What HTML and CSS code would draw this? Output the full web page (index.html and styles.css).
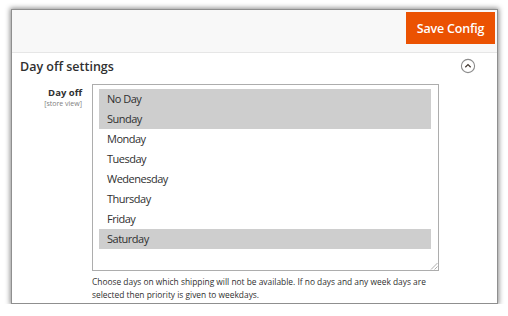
FILE: index.html
```html
<!DOCTYPE html>
<html lang="en">
<head>
    <meta charset="UTF-8">
    <title>Day off settings</title>
    <link rel="stylesheet" href="styles.css">
</head>
<body>
    <div class="frame">
        <div class="page-actions">
            <button class="save-button">Save Config</button>
        </div>
        <div class="section">
            <div class="section-title">
                <span>Day off settings</span>
                <svg class="collapse-icon" width="16" height="16" viewBox="0 0 16 16">
                    <circle cx="8" cy="8" r="6.6" fill="none" stroke="#8c8c8c" stroke-width="1.1"/>
                    <path d="M5.3 9.2 L8 6.6 L10.7 9.2" fill="none" stroke="#41362f" stroke-width="1.2"/>
                </svg>
            </div>
            <div class="field">
                <div class="field-label">
                    <div class="label-text">Day off</div>
                    <div class="scope">[store view]</div>
                </div>
                <div class="field-control">
                    <div class="listbox" role="listbox">
                        <div class="option selected">No Day</div>
                        <div class="option selected">Sunday</div>
                        <div class="option">Monday</div>
                        <div class="option">Tuesday</div>
                        <div class="option">Wedenesday</div>
                        <div class="option">Thursday</div>
                        <div class="option">Friday</div>
                        <div class="option selected">Saturday</div>
                        <svg class="grip" width="8" height="8" viewBox="0 0 8 8">
                            <path d="M7.5 1 L1 7.5 M7.5 4.5 L4.5 7.5" stroke="#9a9a9a" stroke-width="0.8"/>
                        </svg>
                    </div>
                    <p class="note">Choose days on which shipping will not be available. If no days and any week days are selected then priority is given to weekdays.</p>
                </div>
            </div>
        </div>
    </div>
</body>
</html>
```

FILE: styles.css
```css
/* base */
body {
    margin: 0;
    padding: 0;
    background-color: #fff;
    font-family: 'Open Sans', 'Noto Sans', sans-serif;
    color: #303030;
}
/* framed panel */
.frame {
    margin: 9px 0 0 11px;
    width: 485px;
    height: 293px;
    background-color: #fff;
    border: 1px solid #8f8f8f;
    box-shadow: 0 0 5px 1px rgba(0, 0, 0, 0.45);
    overflow: hidden;
}
/* top bar with save button */
.page-actions {
    height: 43px;
    background-color: #f8f8f8;
    border-bottom: 1px solid #e6e6e6;
    display: flex;
    justify-content: flex-end;
    align-items: flex-start;
    padding: 2px 2px 0 0;
    box-sizing: border-box;
}
.save-button {
    width: 89px;
    height: 32px;
    background-color: #eb5202;
    border: none;
    color: #fff;
    font-family: 'Open Sans', sans-serif;
    font-weight: 600;
    font-size: 12.5px;
    letter-spacing: -0.2px;
    padding: 0;
    cursor: pointer;
}
/* section */
.section {
    padding: 0 0 0 8px;
}
.section-title {
    display: flex;
    align-items: center;
    justify-content: space-between;
    height: 26px;
    padding-right: 21px;
    font-size: 12.5px;
    font-weight: 600;
    color: #303030;
}
.collapse-icon {
    display: block;
}
.field {
    display: flex;
    gap: 10px;
    margin-top: 5px;
}
.field-label {
    width: 62px;
    text-align: right;
    padding-top: 3px;
}
.label-text {
    font-size: 9.5px;
    font-weight: 700;
    line-height: 12px;
}
.scope {
    font-size: 7px;
    color: #808080;
    line-height: 9px;
}
.field-control {
    width: 347px;
}
.listbox {
    position: relative;
    height: 187px;
    box-sizing: border-box;
    border: 1px solid #adadad;
    padding: 4px 7px 0 6px;
}
.option {
    height: 20px;
    line-height: 20px;
    padding-left: 8px;
    font-size: 11px;
    letter-spacing: -0.5px;
    color: #303030;
}
.option.selected {
    background-color: #cecece;
}
.grip {
    position: absolute;
    right: 0;
    bottom: 0;
}
.note {
    margin: 5px 0 0;
    font-size: 8.4px;
    line-height: 12.5px;
    color: #303030;
}
```
